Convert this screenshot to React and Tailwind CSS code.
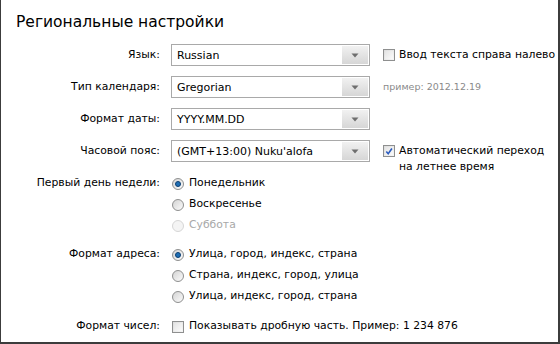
import React from 'react';

const font = { fontFamily: '"DejaVu Sans", "Noto Sans", sans-serif' };

const Select = ({ value }) => (
  <div className="flex items-center w-[199px] h-[22px] border border-[#a9a9a9] bg-white">
    <span className="flex-1 pl-[5px] text-[11px] text-black leading-none whitespace-nowrap">{value}</span>
    <div className="w-[26px] h-[18px] mr-[1px] flex items-center justify-center bg-gradient-to-b from-[#f1f1f1] to-[#d6d6d6]">
      <svg width="8" height="5" viewBox="0 0 8 5">
        <path d="M0.5 0.5 H7.5 L4 4.5 Z" fill="#6e6e6e" />
      </svg>
    </div>
  </div>
);

const Checkbox = ({ checked }) => (
  <div className="w-[12px] h-[12px] shrink-0 border border-[#8e8f8f] bg-gradient-to-br from-[#dcdcdc] to-[#f6f6f6] p-[1px] flex items-center justify-center">
    <div className="w-full h-full bg-gradient-to-br from-[#e4e4e4] to-[#fafafa] flex items-center justify-center">
      {checked && (
        <svg width="9" height="9" viewBox="0 0 9 9">
          <path d="M1.5 4.5 L3.6 7 L7.8 1.2" stroke="#2a5bbf" strokeWidth="1.8" fill="none" />
        </svg>
      )}
    </div>
  </div>
);

const Radio = ({ checked, disabled }) => (
  <div
    className={`w-[12px] h-[12px] shrink-0 rounded-full border flex items-center justify-center ${
      disabled
        ? 'border-[#d6d6d6] bg-[#f4f4f4]'
        : 'border-[#8e8f8f] bg-gradient-to-br from-[#d4d4d4] to-[#fbfbfb]'
    }`}
  >
    {checked && (
      <div className="w-[6px] h-[6px] rounded-full bg-[#1f6fb5] border border-[#0d3f72]" />
    )}
  </div>
);

const Label = ({ children }) => (
  <div className="w-[159px] shrink-0 text-right text-[10.8px] text-black whitespace-nowrap">{children}</div>
);

const RadioRow = ({ checked, disabled, children }) => (
  <div className="flex items-center h-[21px] gap-[5px]">
    <Radio checked={checked} disabled={disabled} />
    <span className={`text-[10.8px] whitespace-nowrap ${disabled ? 'text-[#a8a8a8]' : 'text-black'}`}>{children}</span>
  </div>
);

export default function App() {
  return (
    <div
      className="w-[560px] h-[344px] bg-white border-l border-r-2 border-b-2 border-[#3c3c3c] overflow-hidden"
      style={font}
    >
      <h1 className="pl-[15px] pt-[11px] text-[15.5px] leading-[22px] text-black whitespace-nowrap">Региональные настройки</h1>

      <div className="mt-[11px] flex flex-col gap-[10px]">
        <div className="flex items-center h-[22px]">
          <Label>Язык:</Label>
          <div className="ml-[11px]"><Select value="Russian" /></div>
          <div className="ml-[13px] flex items-center gap-[4px]">
            <Checkbox />
            <span className="text-[10.8px] text-black whitespace-nowrap">Ввод текста справа налево</span>
          </div>
        </div>

        <div className="flex items-center h-[22px]">
          <Label>Тип календаря:</Label>
          <div className="ml-[11px]"><Select value="Gregorian" /></div>
          <span className="ml-[13px] text-[9.5px] text-[#8a8a8a] whitespace-nowrap">пример: 2012.12.19</span>
        </div>

        <div className="flex items-center h-[22px]">
          <Label>Формат даты:</Label>
          <div className="ml-[11px]"><Select value="YYYY.MM.DD" /></div>
        </div>

        <div className="flex items-start h-[33px]">
          <div className="h-[22px] flex items-center"><Label>Часовой пояс:</Label></div>
          <div className="ml-[11px]"><Select value="(GMT+13:00) Nuku'alofa" /></div>
          <div className="ml-[13px] flex items-start gap-[4px] pt-[3px]">
            <div className="mt-[2px]"><Checkbox checked /></div>
            <span className="text-[10.8px] leading-[16px] text-black whitespace-nowrap">
              Автоматический переход
              <br />
              на летнее время
            </span>
          </div>
        </div>
      </div>

      <div className="flex items-start">
        <div className="h-[21px] flex items-center"><Label>Первый день недели:</Label></div>
        <div className="ml-[12px] flex flex-col">
          <RadioRow checked>Понедельник</RadioRow>
          <RadioRow>Воскресенье</RadioRow>
          <RadioRow disabled>Суббота</RadioRow>
        </div>
      </div>

      <div className="mt-[8px] flex items-start">
        <div className="h-[21px] flex items-center"><Label>Формат адреса:</Label></div>
        <div className="ml-[12px] flex flex-col">
          <RadioRow checked>Улица, город, индекс, страна</RadioRow>
          <RadioRow>Страна, индекс, город, улица</RadioRow>
          <RadioRow>Улица, индекс, город, страна</RadioRow>
        </div>
      </div>

      <div className="mt-[9px] flex items-center h-[21px]">
        <Label>Формат чисел:</Label>
        <div className="ml-[12px] flex items-center gap-[5px]">
          <Checkbox />
          <span className="text-[10.8px] text-black whitespace-nowrap">Показывать дробную часть. Пример: 1 234 876</span>
        </div>
      </div>
    </div>
  );
}
